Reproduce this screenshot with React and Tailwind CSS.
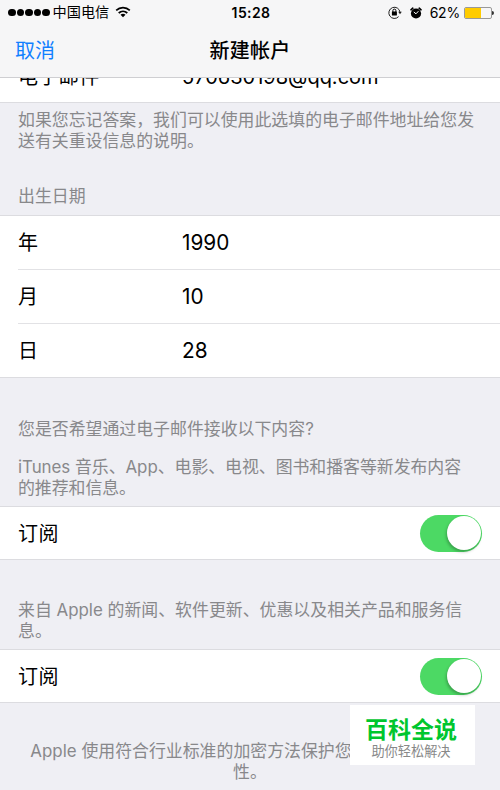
import React, { useState } from "react";

const StatusBar = () => (
  <div className="flex h-[25px] items-center pl-2 pr-[6px] text-black">
    <div className="flex flex-1 items-center">
      <div className="flex gap-[1px]">
        {[0, 1, 2, 3, 4].map((dot) => (
          <span
            key={dot}
            className="h-[7.5px] w-[7.5px] rounded-full bg-black"
          />
        ))}
      </div>
      <span className="ml-[3px] text-[14.2px] leading-none">中国电信</span>
      <svg className="ml-[6px] h-3 w-4" viewBox="0 0 16 12" fill="none">
        <path
          d="M1.2 4.4C5 .7 11 .7 14.8 4.4M3.7 7C6.2 4.7 9.8 4.7 12.3 7"
          stroke="#000"
          strokeWidth="1.7"
        />
        <path d="M8 11.3 5.5 8.8c1.4-1.3 3.6-1.3 5 0z" fill="#000" />
      </svg>
    </div>

    <span className="text-[14px] font-semibold leading-none tracking-[0.4px]">
      15:28
    </span>

    <div className="flex flex-1 items-center justify-end">
      <svg className="h-[13px] w-[14px]" viewBox="0 0 14 13" fill="none">
        <path
          d="M10.6 10.6A5.6 5.6 0 1 1 12 6.2"
          stroke="#222"
          strokeWidth="1"
        />
        <path d="M10.2 5.8h3.6L12 8.2z" fill="#222" />
        <rect x="3.9" y="5.6" width="5" height="4" rx=".5" fill="#000" />
        <path
          d="M4.9 6V4.6a1.5 1.5 0 0 1 3 0V6"
          stroke="#000"
          strokeWidth="1"
        />
      </svg>
      <svg className="ml-2 h-3 w-3" viewBox="0 0 12 12" fill="none">
        <circle cx="6" cy="6.5" r="5.1" fill="#000" />
        <path
          d="M1 2.8 2.8 1.2M11 2.8 9.2 1.2"
          stroke="#000"
          strokeWidth="1.7"
          strokeLinecap="round"
        />
        <path d="M3.8 5 6 6.8l2.4-2.6" stroke="#fff" strokeWidth="1" />
      </svg>
      <span className="ml-[8px] text-[14px] leading-none tracking-[-0.2px]">
        62%
      </span>
      <div className="ml-1 h-[12px] w-[28px] rounded-[2px] border border-[#999]">
        <div className="h-full w-[62%] rounded-l-[1px] bg-[#ffcc00]" />
      </div>
      <span className="h-1 w-[2px] rounded-r-full bg-[#333]" />
    </div>
  </div>
);

const Row = ({ label, value }) => (
  <div className="flex h-full items-center pt-[2px]">
    <span className="w-[164px] tracking-[0.4px]">{label}</span>
    <span>{value}</span>
  </div>
);

const Toggle = ({ checked, onChange }) => (
  <button
    role="switch"
    aria-checked={checked}
    onClick={onChange}
    className={`flex h-[37px] w-[62px] items-center rounded-full p-[1.5px] ${
      checked ? "justify-end bg-[#4cd964]" : "justify-start bg-[#e5e5e5]"
    }`}
  >
    <span className="h-[34px] w-[34px] rounded-full bg-white shadow-[-1px_2px_3px_rgba(0,0,0,0.25)]" />
  </button>
);

const SubscribeRow = () => {
  const [checked, setChecked] = useState(true);

  return (
    <div className="flex h-[54px] items-center justify-between border-y border-[#dcdce0] bg-white px-[18px]">
      <span className="pt-px tracking-[0.4px]">订阅</span>
      <Toggle checked={checked} onChange={() => setChecked(!checked)} />
    </div>
  );
};

const Note = ({ children, className = "" }) => (
  <p
    className={`whitespace-nowrap px-[18px] text-[16.9px] leading-[20.5px] text-[#88888b] ${className}`}
  >
    {children}
  </p>
);

export default function App() {
  const birthday = [
    { label: "年", value: "1990" },
    { label: "月", value: "10" },
    { label: "日", value: "28" },
  ];

  return (
    <div className="relative h-[790px] w-[500px] overflow-hidden bg-[#efeff4] font-['Inter','Noto_Sans_CJK_SC',sans-serif] text-[20px] text-black">
      <header className="h-[78px] border-b border-[#cfcfd2] bg-[#f6f6f7]">
        <StatusBar />
        <div className="grid h-[52px] grid-cols-3 items-center px-[15px]">
          <button className="text-left text-[20px] text-[#1080ff]">取消</button>
          <h1 className="text-center text-[20px] font-medium tracking-[0.3px]">
            新建帐户
          </h1>
        </div>
      </header>

      {/* Email row, scrolled partly under the header */}
      <div className="flex h-[25px] items-end overflow-hidden border-b border-[#dcdce0] bg-white pl-[18px]">
        <div className="h-[52px] shrink-0">
          <Row label="电子邮件" value="570630198@qq.com" />
        </div>
      </div>

      <Note className="mt-[7px]">
        如果您忘记答案，我们可以使用此选填的电子邮件地址给您发
        <br />
        送有关重设信息的说明。
      </Note>

      <Note className="mt-[35px]">出生日期</Note>
      <div className="mt-[8px] border-t border-[#dcdce0] bg-white">
        {birthday.map((item, index) => (
          <div
            key={item.label}
            className={`h-[54px] border-b ${
              index < birthday.length - 1
                ? "ml-[18px] border-[#e2e2e5]"
                : "border-[#dcdce0] pl-[18px]"
            }`}
          >
            <Row
              label={item.label}
              value={<span className="text-[20.8px]">{item.value}</span>}
            />
          </div>
        ))}
      </div>

      <Note className="mt-[41px]">您是否希望通过电子邮件接收以下内容?</Note>
      <Note className="mb-[8px] mt-[18px] tracking-[-0.04px]">
        iTunes 音乐、App、电影、电视、图书和播客等新发布内容
        <br />
        的推荐和信息。
      </Note>
      <SubscribeRow />

      <Note className="mb-[8px] mt-[40px]">
        来自 Apple 的新闻、软件更新、优惠以及相关产品和服务信
        <br />
        息。
      </Note>
      <SubscribeRow />

      <Note className="mt-[38px] text-center">
        Apple 使用符合行业标准的加密方法保护您
        <span className="inline-block w-[118px]" />
        <br />
        性。
      </Note>

      <div className="absolute left-[350px] top-[705px] flex h-[60px] w-[125px] flex-col items-center bg-white pr-[3px] pt-[12px]">
        <span className="text-[23px] font-bold leading-[26px] text-[#00c62e]">
          百科全说
        </span>
        <span className="text-[13.2px] leading-[17px] text-[#888]">
          助你轻松解决
        </span>
      </div>
    </div>
  );
}
